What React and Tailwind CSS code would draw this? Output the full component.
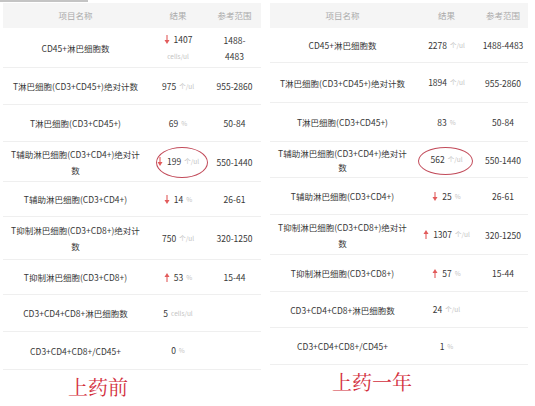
import React from 'react';

const leftRows = [
  { name: ['CD45+淋巴细胞数'], value: '1407', unit: 'cells/ul', arrow: 'down', unitBelow: true, range: ['1488-', '4483'], h: 'h-[40px]' },
  { name: ['T淋巴细胞(CD3+CD45+)绝对计数'], value: '975', unit: '个/ul', range: ['955-2860'], h: 'h-[37px]' },
  { name: ['T淋巴细胞(CD3+CD45+)'], value: '69', unit: '%', range: ['50-84'], h: 'h-[37px]' },
  { name: ['T辅助淋巴细胞(CD3+CD4+)绝对计', '数'], value: '199', unit: '个/ul', arrow: 'down', circle: 'left-[8px] top-[5px] w-[52px] h-[31px]', range: ['550-1440'], h: 'h-[40px]' },
  { name: ['T辅助淋巴细胞(CD3+CD4+)'], value: '14', unit: '%', arrow: 'down', range: ['26-61'], h: 'h-[35px]' },
  { name: ['T抑制淋巴细胞(CD3+CD8+)绝对计', '数'], value: '750', unit: '个/ul', range: ['320-1250'], h: 'h-[43px]' },
  { name: ['T抑制淋巴细胞(CD3+CD8+)'], value: '53', unit: '%', arrow: 'up', range: ['15-44'], h: 'h-[35px]' },
  { name: ['CD3+CD4+CD8+淋巴细胞数'], value: '5', unit: 'cells/ul', range: [], h: 'h-[37px]' },
  { name: ['CD3+CD4+CD8+/CD45+'], value: '0', unit: '%', range: [], h: 'h-[38px]' },
];

const rightRows = [
  { name: ['CD45+淋巴细胞数'], value: '2278', unit: '个/ul', range: ['1488-4483'], h: 'h-[35px]' },
  { name: ['T淋巴细胞(CD3+CD45+)绝对计数'], value: '1894', unit: '个/ul', range: ['955-2860'], h: 'h-[40px]' },
  { name: ['T淋巴细胞(CD3+CD45+)'], value: '83', unit: '%', range: ['50-84'], h: 'h-[39px]' },
  { name: ['T辅助淋巴细胞(CD3+CD4+)绝对计', '数'], value: '562', unit: '个/ul', circle: 'left-[3px] top-[5px] w-[55px] h-[28px]', range: ['550-1440'], h: 'h-[36px]', lead: 'leading-[14px]' },
  { name: ['T辅助淋巴细胞(CD3+CD4+)'], value: '25', unit: '%', arrow: 'down', range: ['26-61'], h: 'h-[37px]' },
  { name: ['T抑制淋巴细胞(CD3+CD8+)绝对计', '数'], value: '1307', unit: '个/ul', arrow: 'up', range: ['320-1250'], h: 'h-[40px]' },
  { name: ['T抑制淋巴细胞(CD3+CD8+)'], value: '57', unit: '%', arrow: 'up', range: ['15-44'], h: 'h-[37px]' },
  { name: ['CD3+CD4+CD8+淋巴细胞数'], value: '24', unit: '个/ul', range: [], h: 'h-[36px]' },
  { name: ['CD3+CD4+CD8+/CD45+'], value: '1', unit: '%', range: [], h: 'h-[37px]' },
];

const Arrow = ({ dir }) => (
  <svg width="6" height="9" viewBox="0 0 6 9" className="mr-[4px] shrink-0">
    {dir === 'down' ? (
      <>
        <line x1="3" y1="0" x2="3" y2="6" stroke="#e25b5b" strokeWidth="1.1" />
        <polygon points="0.5,5 5.5,5 3,9" fill="#e25b5b" />
      </>
    ) : (
      <>
        <line x1="3" y1="3" x2="3" y2="9" stroke="#e25b5b" strokeWidth="1.1" />
        <polygon points="0.5,4 5.5,4 3,0" fill="#e25b5b" />
      </>
    )}
  </svg>
);

const Table = ({ rows, cols, caption, capPad }) => (
  <div className="w-[258px] flex flex-col">
    <div className={`grid ${cols} h-[25px] bg-[#f5f5f5] items-center text-center text-[#aaaaaa] text-[8.5px]`}>
      <div>项目名称</div>
      <div>结果</div>
      <div>参考范围</div>
    </div>
    {rows.map((r, i) => (
      <div key={i} className={`grid ${cols} ${r.h} items-center text-center text-[#383838] text-[8.5px] border-b border-[#efefef]`}>
        <div className={`flex flex-col items-center whitespace-nowrap ${r.lead || 'leading-[16px]'}`}>
          {r.name.map((l, j) => <span key={j}>{l}</span>)}
        </div>
        <div className="relative h-full flex flex-col items-center justify-center leading-[17px]">
          <div className="flex items-center whitespace-nowrap">
            {r.arrow && <Arrow dir={r.arrow} />}
            <span>{r.value}</span>
            {!r.unitBelow && <span className="ml-[3px] text-[6.5px] text-[#c4c4c4]">{r.unit}</span>}
          </div>
          {r.unitBelow && <div className="text-[6.5px] text-[#c4c4c4]">{r.unit}</div>}
          {r.circle && <div className={`absolute ${r.circle} rounded-[50%] border border-[#c24b5a]`} />}
        </div>
        <div className="flex flex-col items-center whitespace-nowrap leading-[16px]">
          {r.range.map((l, j) => <span key={j}>{l}</span>)}
        </div>
      </div>
    ))}
    <div
      className={`${capPad} pt-[5px] text-[20px] leading-[24px] text-[#d3303d]`}
      style={{ fontFamily: '"Noto Serif CJK SC", "Liberation Serif", serif' }}
    >
      {caption}
    </div>
  </div>
);

export default function App() {
  return (
    <div className="w-[535px] h-[406px] bg-white overflow-hidden" style={{ fontFamily: '"Noto Sans CJK SC", sans-serif' }}>
      <div className="w-[88px] h-[2px] bg-[#c4c4c4]" />
      <div className="flex pt-[1px] pl-[3px] gap-[9px]">
        <Table rows={leftRows} cols="grid-cols-[145px_60px_53px]" caption="上药前" capPad="pl-[65px]" />
        <Table rows={rightRows} cols="grid-cols-[145px_63px_50px]" caption="上药一年" capPad="pl-[62px]" />
      </div>
    </div>
  );
}
